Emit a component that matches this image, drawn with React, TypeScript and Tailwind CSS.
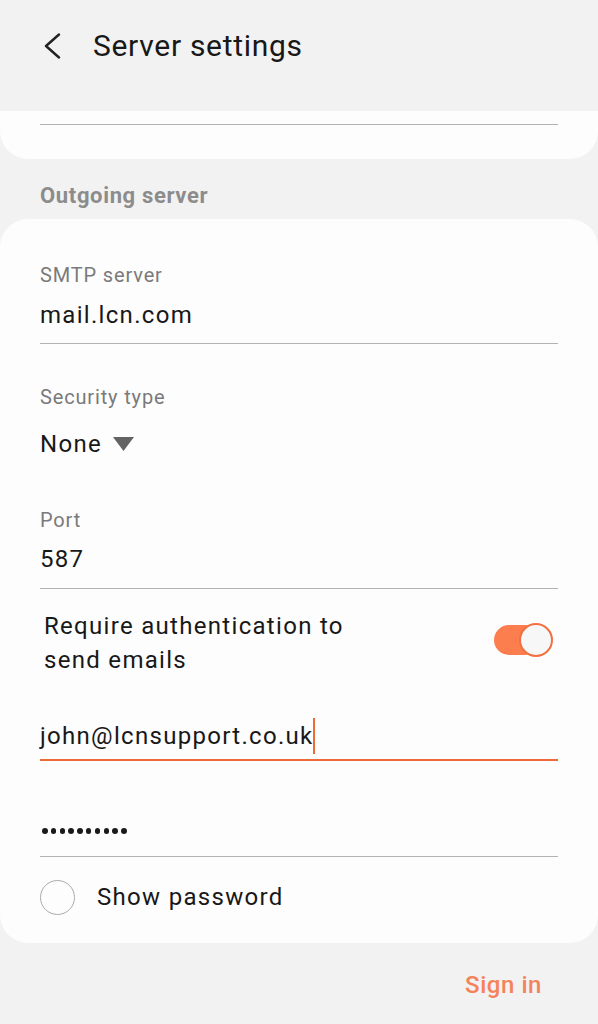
import React from 'react'

const font = { fontFamily: 'Roboto, "Noto Sans", sans-serif' }

function Label({ text, className = '' }: { text: string; className?: string }) {
  return (
    <div className={`text-[20px] leading-[24px] tracking-[0.85px] text-[#7a7a7a] ${className}`}>{text}</div>
  )
}

function Divider({ className = '' }: { className?: string }) {
  return <div className={`h-px bg-[#b3b3b3] ${className}`} />
}

export default function App() {
  return (
    <div style={font} className="w-[598px] h-[1024px] bg-[#f2f2f2] overflow-hidden text-[#181818]">
      {/* header */}
      <div className="h-[111px] flex items-center pl-[44px] pb-[19px]">
        <svg width="18" height="26" viewBox="0 0 18 26" fill="none">
          <polyline points="15,1.5 2,13 15,24.5" stroke="#222" strokeWidth="2.4" strokeLinecap="round" strokeLinejoin="round" />
        </svg>
        <h1 className="ml-[31px] text-[30px] leading-[36px] tracking-[0.7px] font-normal">Server settings</h1>
      </div>

      {/* previous section tail */}
      <div className="h-[48px] bg-[#fdfdfd] rounded-b-[28px] px-[40px] pt-[13px]">
        <Divider />
      </div>

      <div className="mt-[24px] mb-[10px] px-[40px] text-[22px] leading-[26px] tracking-[0.65px] font-bold text-[#8c8c8c]">
        Outgoing server
      </div>

      {/* outgoing server card */}
      <div className="bg-[#fdfdfd] rounded-[28px] px-[40px] pt-[44px] pb-[28px] text-[24px] tracking-[1.3px]">
        <Label text="SMTP server" />
        <div className="mt-[13px] leading-[30px]">mail.lcn.com</div>
        <Divider className="mt-[13px]" />

        <Label text="Security type" className="mt-[41px]" />
        <div className="mt-[20px] flex items-center leading-[30px]">
          <span>None</span>
          <svg className="ml-[11px]" width="21" height="14" viewBox="0 0 21 14">
            <polygon points="0,0 21,0 10.5,14" fill="#636363" />
          </svg>
        </div>

        <Label text="Port" className="mt-[49px]" />
        <div className="mt-[12px] leading-[30px]">587</div>
        <Divider className="mt-[14px]" />

        <div className="mt-[20px] flex items-center justify-between pl-[4px] pr-[5px]">
          <div className="leading-[34px]">
            Require authentication to
            <br />
            send emails
          </div>
          <div className="flex items-center -mt-[6px]">
            <div className="w-[46px] h-[30px] rounded-full bg-[#fc7d4e]" />
            <div className="-ml-[21px] w-[34px] h-[34px] rounded-full border-2 border-[#f2703f] bg-[#f7f7f7]" />
          </div>
        </div>

        <div className="mt-[44px] flex items-center leading-[30px]">
          <span>john@lcnsupport.co.uk</span>
          <span className="-ml-[1px] -my-[3px] w-[2px] h-[36px] bg-[#ee6a35]" />
        </div>
        <div className="mt-[8px] h-[2px] bg-[#ec6b38]" />

        {/* masked password */}
        <div className="mt-[55px] h-[30px] pl-[2px] flex items-center gap-[3.3px]" aria-label="password">
          {Array.from({ length: 10 }).map((_, i) => (
            <span key={i} className="w-[5.5px] h-[5.5px] rounded-full bg-[#1a1a1a]" />
          ))}
        </div>
        <Divider className="mt-[10px] bg-[#9a9a9a]" />

        <div className="mt-[22px] h-[36px] flex items-center">
          <div className="w-[35px] h-[35px] rounded-full border-[1.5px] border-[#ababab]" />
          <span className="ml-[22px] leading-[30px]">Show password</span>
        </div>
      </div>

      <div className="mt-[27px] flex justify-end pr-[56px]">
        <span className="text-[24px] leading-[30px] tracking-[0.55px] font-medium text-[#f5835a]">Sign in</span>
      </div>
    </div>
  )
}
